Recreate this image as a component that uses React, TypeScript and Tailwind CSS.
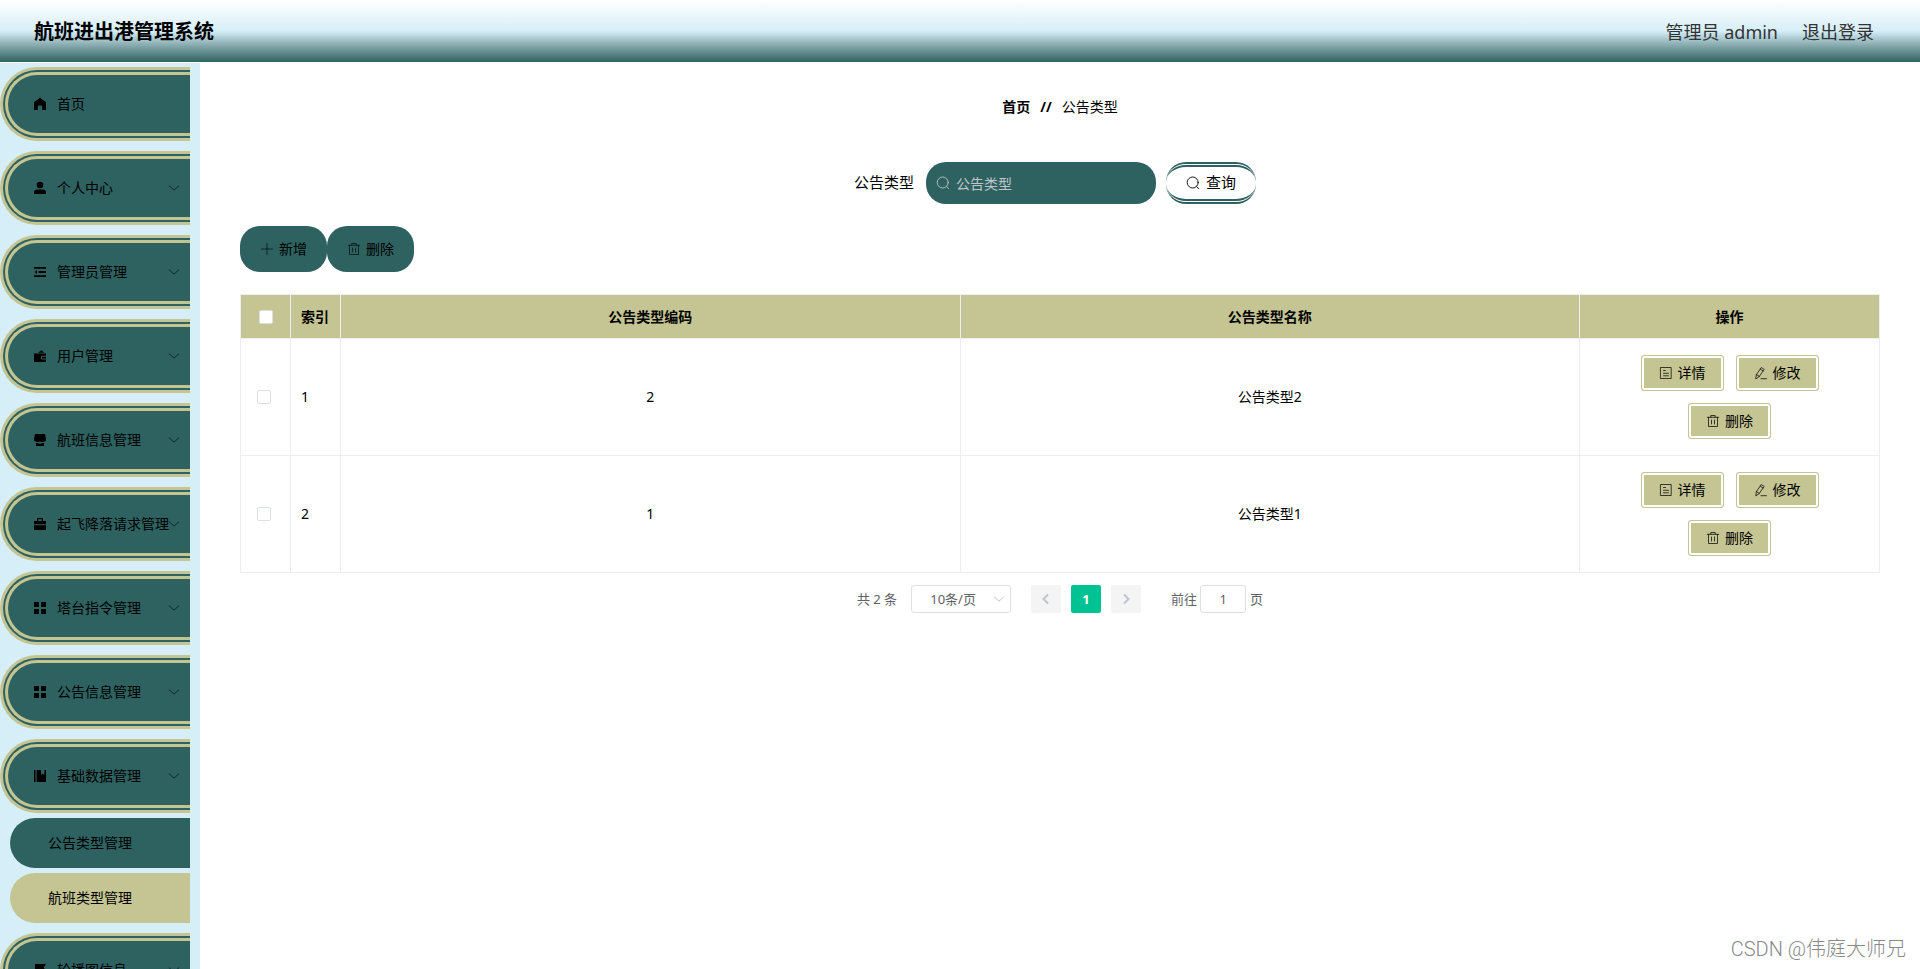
import { useState } from "react";
import type { ReactNode } from "react";

interface MenuItem {
  label: string;
  icon: ReactNode;
  children?: string[];
  plain?: boolean;
}

interface NoticeType {
  id: number;
  code: string;
  name: string;
}

function SolidIcon({ children }: { children: ReactNode }) {
  return (
    <svg viewBox="0 0 14 14" fill="currentColor" className="h-3.5 w-3.5 shrink-0" aria-hidden="true">
      {children}
    </svg>
  );
}

function LineIcon({ children, className = "h-3.5 w-3.5" }: { children: ReactNode; className?: string }) {
  return (
    <svg
      viewBox="0 0 14 14"
      fill="none"
      stroke="currentColor"
      strokeWidth="0.9"
      strokeLinecap="round"
      strokeLinejoin="round"
      className={`shrink-0 ${className}`}
      aria-hidden="true"
    >
      {children}
    </svg>
  );
}

const gridIcon = (
  <SolidIcon>
    <path d="M1 1h5v5H1zM8 1h5v5H8zM1 8h5v5H1zM8 8h5v5H8z" />
  </SolidIcon>
);

const menu: MenuItem[] = [
  {
    label: "首页",
    plain: true,
    icon: (
      <SolidIcon>
        <path d="M7 .8 1 5.2V13h3.8V9.4a1 1 0 0 1 1-1h2.4a1 1 0 0 1 1 1V13H13V5.2z" />
      </SolidIcon>
    ),
  },
  {
    label: "个人中心",
    icon: (
      <SolidIcon>
        <circle cx="7" cy="4" r="3.3" />
        <path d="M1 13v-1.4c0-1.8 1.4-3 3-3h6c1.6 0 3 1.2 3 3V13z" />
      </SolidIcon>
    ),
  },
  {
    label: "管理员管理",
    icon: (
      <SolidIcon>
        <path d="M1 2h12v1.8H1zM5.5 6.1H13v1.8H5.5zM1 10.2h12V12H1zM4 4.9v4.2L1.6 7z" />
      </SolidIcon>
    ),
  },
  {
    label: "用户管理",
    icon: (
      <SolidIcon>
        <path d="m5 3.8 3.6-2.6 2.6 2.6z" />
        <path d="M1 4.6h12v2.2H9.6a1.9 1.9 0 0 0 0 3.8H13V13H1z" />
        <path d="M9.8 7.8H13v1.8H9.8a.9.9 0 0 1 0-1.8z" />
      </SolidIcon>
    ),
  },
  {
    label: "航班信息管理",
    icon: (
      <SolidIcon>
        <path d="M2 1h10l1 5.5c0 1-.5 2-1.3 2S10.3 9 9.5 9 8.2 8.700 7 8.700 5.400 9 4.500 9s-1.100-.5-1.900-.5S1 7.500 1 6.500z" />
        <path d="M3 10h1.500c.7.6 1.500.8 2.500.8s1.800-.2 2.500-.8H11v3H3z" />
      </SolidIcon>
    ),
  },
  {
    label: "起飞降落请求管理",
    icon: (
      <SolidIcon>
        <path d="M4 1h6v3h3v3.200H1V4h3zm1.200 1.200V4h3.600V2.200zM1 8.300h12V13H1z" fillRule="evenodd" />
      </SolidIcon>
    ),
  },
  { label: "塔台指令管理", icon: gridIcon },
  { label: "公告信息管理", icon: gridIcon },
  {
    label: "基础数据管理",
    icon: (
      <SolidIcon>
        <path d="M1 1h1.500v12H1zM3.600 1H8v5l1.700-1.400L11.400 6V1H13v12H3.600z" />
      </SolidIcon>
    ),
    children: ["公告类型管理", "航班类型管理"],
  },
  {
    label: "轮播图信息",
    icon: (
      <SolidIcon>
        <path d="M2 1h11l-2.200 3.500L13 8.500H3.400V13H2z" />
      </SolidIcon>
    ),
  },
];

const rows: NoticeType[] = [
  { id: 1, code: "2", name: "公告类型2" },
  { id: 2, code: "1", name: "公告类型1" },
];

function SearchIcon() {
  return (
    <LineIcon>
      <circle cx="6.7" cy="6.5" r="5.5" />
      <path d="m10.700 10.600 2 2.200" />
    </LineIcon>
  );
}

function TrashIcon() {
  return (
    <LineIcon>
      <path d="M1.300 3.300h11.400M4.800 3.300V1.500h4.400v1.800M2.500 3.300v9.200h9V3.300M5.500 6v4M8.500 6v4" />
    </LineIcon>
  );
}

function Chevron() {
  return (
    <LineIcon className="h-3 w-3">
      <path d="m1.500 4.500 5.500 5 5.500-5" />
    </LineIcon>
  );
}

function Sidebar() {
  return (
    <nav className="w-[200px] shrink-0 overflow-hidden bg-[#d6eef8] pt-1 pr-2.5">
      <ul>
        {menu.map((item) => (
          <li key={item.label} className="mb-2.5">
            <button
              type="button"
              className="flex h-[74px] w-full items-center gap-2.5 rounded-l-[37px] border-8 border-r-0 border-double border-[#c4c593] bg-[#2e6260] pr-2.5 pl-[25px] text-left"
            >
              {item.icon}
              <span className="min-w-0 flex-1 whitespace-nowrap">{item.label}</span>
              {!item.plain && (
                <span className="text-black/80">
                  <Chevron />
                </span>
              )}
            </button>
            {item.children && (
              <ul className="mt-[5px] space-y-[5px] pl-2.5">
                {item.children.map((child, i) => (
                  <li key={child}>
                    <a
                      href="#"
                      className={`block h-[50px] rounded-l-[25px] pl-[38px] leading-[50px] ${
                        i === 1 ? "bg-[#c4c593]" : "bg-[#2e6260]"
                      }`}
                    >
                      {child}
                    </a>
                  </li>
                ))}
              </ul>
            )}
          </li>
        ))}
      </ul>
    </nav>
  );
}

function ToolButton({ icon, label }: { icon: ReactNode; label: string }) {
  return (
    <button
      type="button"
      className="flex h-[46px] w-[87px] items-center justify-center gap-[5px] rounded-[20px] bg-[#2e6260]"
    >
      <span className="text-black/70">{icon}</span>
      {label}
    </button>
  );
}

function RowButton({ icon, label }: { icon: ReactNode; label: string }) {
  return (
    <button
      type="button"
      className="flex h-9 w-[83px] items-center justify-center gap-[5px] rounded-[3px] border border-[#c4c593] bg-[#c4c593] shadow-[inset_0_0_0_2px_white]"
    >
      <span className="text-black/80">{icon}</span>
      {label}
    </button>
  );
}

function NoticeTable() {
  const [selected, setSelected] = useState<number[]>([]);

  const toggle = (id: number) =>
    setSelected((prev) => (prev.includes(id) ? prev.filter((x) => x !== id) : [...prev, id]));

  const checkbox =
    "block h-3.5 w-3.5 appearance-none rounded-[2px] border border-[#dcdfe6] bg-white checked:bg-[#00c292]";

  return (
    <table className="mt-[22px] w-full table-fixed border-collapse text-center">
      <colgroup>
        <col className="w-[50px]" />
        <col className="w-[50px]" />
        <col />
        <col />
        <col className="w-[300px]" />
      </colgroup>
      <thead>
        <tr className="h-11 bg-[#c4c593] *:border *:border-[#ebeef5]">
          <th className="pl-[18px]">
            <input
              type="checkbox"
              aria-label="全选"
              className={checkbox}
              checked={selected.length === rows.length}
              onChange={() => setSelected(selected.length === rows.length ? [] : rows.map((r) => r.id))}
            />
          </th>
          <th className="px-2.5 text-left">索引</th>
          <th>公告类型编码</th>
          <th>公告类型名称</th>
          <th>操作</th>
        </tr>
      </thead>
      <tbody>
        {rows.map((row) => (
          <tr key={row.id} className="*:border *:border-[#ebeef5]">
            <td className="pl-4">
              <input
                type="checkbox"
                aria-label={row.name}
                className={checkbox}
                checked={selected.includes(row.id)}
                onChange={() => toggle(row.id)}
              />
            </td>
            <td className="px-2.5 text-left">{row.id}</td>
            <td>{row.code}</td>
            <td>{row.name}</td>
            <td className="px-10 py-4">
              <div className="flex flex-wrap justify-center gap-3">
                <RowButton
                  label="详情"
                  icon={
                    <LineIcon>
                      <path d="M1.800 1.500h10.400v11H1.800zM4.500 4.500h2M4.500 7.300h5M4.500 9.800h5" />
                    </LineIcon>
                  }
                />
                <RowButton
                  label="修改"
                  icon={
                    <LineIcon>
                      <path d="m1.800 12.500.6-4L7.300 1.500l2.900 1.900-4.900 7zM6.200 3.100 9.100 5M2.400 8.500l2.900 1.900M7 12.700h5.500" />
                    </LineIcon>
                  }
                />
                <RowButton label="删除" icon={<TrashIcon />} />
              </div>
            </td>
          </tr>
        ))}
      </tbody>
    </table>
  );
}

function Pagination() {
  return (
    <div className="mt-3 flex items-center justify-center text-[13px] text-[#606266]">
      <span>共 2 条</span>
      <div className="relative ml-3.5">
        <select
          aria-label="每页条数"
          className="block h-7 w-[100px] appearance-none rounded-[3px] border border-[#dcdfe6] bg-white pr-4 text-center"
        >
          <option>10条/页</option>
          <option>20条/页</option>
        </select>
        <span className="pointer-events-none absolute top-2 right-1.5 text-[#b0b4bc]">
          <Chevron />
        </span>
      </div>
      <div className="ml-5 flex gap-2.5">
        <button
          type="button"
          aria-label="上一页"
          className="flex h-7 w-[30px] items-center justify-center rounded-[2px] bg-[#f4f4f5] text-[#c0c4cc]"
        >
          <svg viewBox="0 0 12 12" fill="none" stroke="currentColor" strokeWidth="2" className="h-3 w-3">
            <path d="M8 1.500 3.500 6 8 10.500" />
          </svg>
        </button>
        <button type="button" className="h-7 w-[30px] rounded-[2px] bg-[#00c292] font-bold text-white">
          1
        </button>
        <button
          type="button"
          aria-label="下一页"
          className="flex h-7 w-[30px] items-center justify-center rounded-[2px] bg-[#f4f4f5] text-[#c0c4cc]"
        >
          <svg viewBox="0 0 12 12" fill="none" stroke="currentColor" strokeWidth="2" className="h-3 w-3">
            <path d="M4 1.500 8.500 6 4 10.500" />
          </svg>
        </button>
      </div>
      <label htmlFor="page" className="ml-[30px]">
        前往
      </label>
      <input
        id="page"
        defaultValue="1"
        className="mr-1 ml-[3px] h-7 w-[46px] rounded-[3px] border border-[#dcdfe6] text-center"
      />
      <span>页</span>
    </div>
  );
}

export default function App() {
  return (
    <div className="flex h-screen flex-col overflow-hidden bg-white font-['Noto_Sans','Noto_Sans_CJK_SC',sans-serif] text-sm text-black">
      <header className="mb-px flex h-[62px] shrink-0 items-center justify-between bg-linear-to-b from-white via-[#d6eef8] to-[#2e6260] pt-0.5 pr-[46px] pl-[34px]">
        <h1 className="text-xl font-bold">航班进出港管理系统</h1>
        <div className="flex gap-6 text-lg text-[#333]">
          <span>管理员 admin</span>
          <a href="#">退出登录</a>
        </div>
      </header>

      <div className="flex min-h-0 flex-1">
        <Sidebar />

        <main className="min-w-0 flex-1 px-10 pt-[34px]">
          <div className="flex justify-center gap-2.5">
            <b>首页</b>
            <b>//</b>
            <span>公告类型</span>
          </div>

          <form
            className="mt-[45px] flex items-center justify-center pr-2.5 text-[15px]"
            onSubmit={(e) => e.preventDefault()}
          >
            <label htmlFor="type">公告类型</label>
            <div className="relative ml-3">
              <span className="absolute top-3.5 left-2.5 text-[#c0c4cc]">
                <SearchIcon />
              </span>
              <input
                id="type"
                placeholder="公告类型"
                className="block h-[42px] w-[230px] rounded-[20px] bg-[#2e6260] pr-4 pl-[30px] text-sm text-white placeholder:text-[#c0c4cc]"
              />
            </div>
            <button
              type="submit"
              className="ml-2.5 flex h-[42px] w-[90px] items-center justify-center gap-1.5 rounded-[20px] border-y-[5px] border-double border-[#2e6260]"
            >
              <SearchIcon />
              查询
            </button>
          </form>

          <div className="mt-[22px] flex">
            <ToolButton
              label="新增"
              icon={
                <LineIcon>
                  <path d="M7 1.500v11M1.500 7h11" />
                </LineIcon>
              }
            />
            <ToolButton label="删除" icon={<TrashIcon />} />
          </div>

          <NoticeTable />
          <Pagination />
        </main>
      </div>

      <div className="pointer-events-none absolute right-3.5 bottom-1.5 font-[Roboto,'Noto_Sans_CJK_SC',sans-serif] text-xl font-light text-[#888]">
        CSDN @伟庭大师兄
      </div>
    </div>
  );
}
